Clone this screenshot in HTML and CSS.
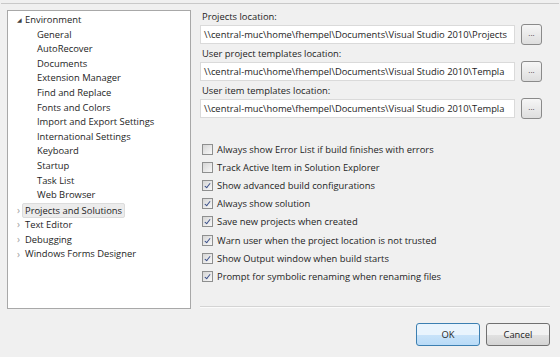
FILE: index.html
```html
<!DOCTYPE html>
<html lang="en">
  <head>
    <meta charset="UTF-8" />
    <title>Options - Projects and Solutions</title>
    <link rel="stylesheet" href="styles.css">
  </head>
  <body>
    <div class="dialog">
      <div class="body">
        <div class="tree">
          <div class="node open"><span class="arrow">&#9698;</span>Environment</div>
          <div class="node child">General</div>
          <div class="node child">AutoRecover</div>
          <div class="node child">Documents</div>
          <div class="node child">Extension Manager</div>
          <div class="node child">Find and Replace</div>
          <div class="node child">Fonts and Colors</div>
          <div class="node child">Import and Export Settings</div>
          <div class="node child">International Settings</div>
          <div class="node child">Keyboard</div>
          <div class="node child">Startup</div>
          <div class="node child">Task List</div>
          <div class="node child">Web Browser</div>
          <div class="node"><span class="arrow closed">&rsaquo;</span><span class="label selected">Projects and Solutions</span></div>
          <div class="node"><span class="arrow closed">&rsaquo;</span><span class="label">Text Editor</span></div>
          <div class="node"><span class="arrow closed">&rsaquo;</span><span class="label">Debugging</span></div>
          <div class="node"><span class="arrow closed">&rsaquo;</span><span class="label">Windows Forms Designer</span></div>
        </div>

        <div class="page">
          <div class="field">
            <label>Projects location:</label>
            <div class="path-row">
              <div class="path">\\central-muc\home\fhempel\Documents\Visual Studio 2010\Projects</div>
              <button class="browse">...</button>
            </div>
          </div>
          <div class="field">
            <label>User project templates location:</label>
            <div class="path-row">
              <div class="path">\\central-muc\home\fhempel\Documents\Visual Studio 2010\Templa</div>
              <button class="browse">...</button>
            </div>
          </div>
          <div class="field">
            <label>User item templates location:</label>
            <div class="path-row">
              <div class="path">\\central-muc\home\fhempel\Documents\Visual Studio 2010\Templa</div>
              <button class="browse">...</button>
            </div>
          </div>

          <div class="checks">
            <div class="check"><span class="box"></span>Always show Error List if build finishes with errors</div>
            <div class="check"><span class="box"></span>Track Active Item in Solution Explorer</div>
            <div class="check"><span class="box on"></span>Show advanced build configurations</div>
            <div class="check"><span class="box on"></span>Always show solution</div>
            <div class="check"><span class="box on"></span>Save new projects when created</div>
            <div class="check"><span class="box on"></span>Warn user when the project location is not trusted</div>
            <div class="check"><span class="box on"></span>Show Output window when build starts</div>
            <div class="check"><span class="box on"></span>Prompt for symbolic renaming when renaming files</div>
          </div>

          <div class="separator"></div>
        </div>
      </div>

      <div class="buttons">
        <button class="btn default">OK</button>
        <button class="btn">Cancel</button>
      </div>
    </div>
  </body>
</html>
```

FILE: styles.css
```css
html,
body {
  margin: 0;
  background-color: #f0f0f0;
}
body {
  font-family: "Open Sans", sans-serif;
  font-size: 9.4px;
  color: #1e1e1e;
}
.dialog {
  width: 558px;
  height: 351px;
  margin-left: 1px;
  border-top: 1px solid #c9c9c9;
  margin-top: 3px;
}
.body {
  display: flex;
  padding: 6px 0 0 6px;
}
.tree {
  width: 184px;
  height: 299px;
  background: white;
  border: 1px solid #a8a8a8;
  padding-top: 2px;
  box-sizing: border-box;
}
.node {
  height: 14.6px;
  line-height: 14.6px;
  white-space: nowrap;
  padding-left: 9px;
  display: flex;
  align-items: center;
}
.node.child {
  padding-left: 29px;
}
.arrow {
  display: inline-block;
  width: 8px;
  font-size: 6px;
  color: #404040;
}
.arrow.closed {
  font-size: 10px;
  color: #a0a0a0;
  width: 5px;
}
.label {
  padding: 0 2px;
  border: 1px solid transparent;
  line-height: 13px;
}
.label.selected {
  background: #ececec;
  border-color: #dcdcdc;
  border-radius: 2px;
}
.page {
  display: flex;
  flex-direction: column;
  margin-left: 9px;
  width: 350px;
}
.field label {
  display: block;
  line-height: 13px;
  padding-left: 2px;
}
.path-row {
  display: flex;
  align-items: center;
  gap: 6px;
  margin: 1px 0 2px;
}
.path {
  width: 315px;
  height: 19px;
  line-height: 18px;
  padding: 0 3px;
  box-sizing: border-box;
  background: white;
  border: 1px solid #dadada;
  overflow: hidden;
  white-space: nowrap;
}
.browse {
  width: 21px;
  height: 21px;
  padding: 0 0 4px;
  font-family: inherit;
  font-size: 8px;
  color: #404040;
  border: 1px solid #8a8a8a;
  border-radius: 3px;
  background: linear-gradient(#f6f6f6, #dedede);
}
.checks {
  margin-top: 19px;
  padding-left: 2px;
}
.check {
  display: flex;
  align-items: center;
  height: 18.2px;
  white-space: nowrap;
}
.box {
  width: 9px;
  height: 9px;
  border: 1px solid #8e8f8f;
  margin-right: 4px;
  background: linear-gradient(135deg, #d6d6d6, #f8f8f8);
  position: relative;
}
.box.on::after {
  content: "";
  position: absolute;
  left: 3px;
  top: 1px;
  width: 2px;
  height: 5px;
  border: solid #3a4f8a;
  border-width: 0 1.5px 1.5px 0;
  transform: rotate(38deg);
}
.separator {
  margin-top: auto;
  margin-bottom: 1px;
  height: 1px;
  background: #d4d4d4;
  border-bottom: 1px solid #fbfbfb;
}
.buttons {
  display: flex;
  justify-content: flex-end;
  gap: 6px;
  padding: 14px 9px 0 0;
}
.btn {
  width: 64px;
  height: 23px;
  font-family: inherit;
  font-size: 9.4px;
  color: #1e1e1e;
  border: 1px solid #707070;
  border-radius: 3px;
  background: linear-gradient(#f2f2f2 50%, #e2e2e2 50%, #d4d4d4);
}
.btn.default {
  border-color: #3c7fb1;
  background: linear-gradient(#e9f4fd 50%, #c9e3f9 50%, #b9dbf7);
}
```
